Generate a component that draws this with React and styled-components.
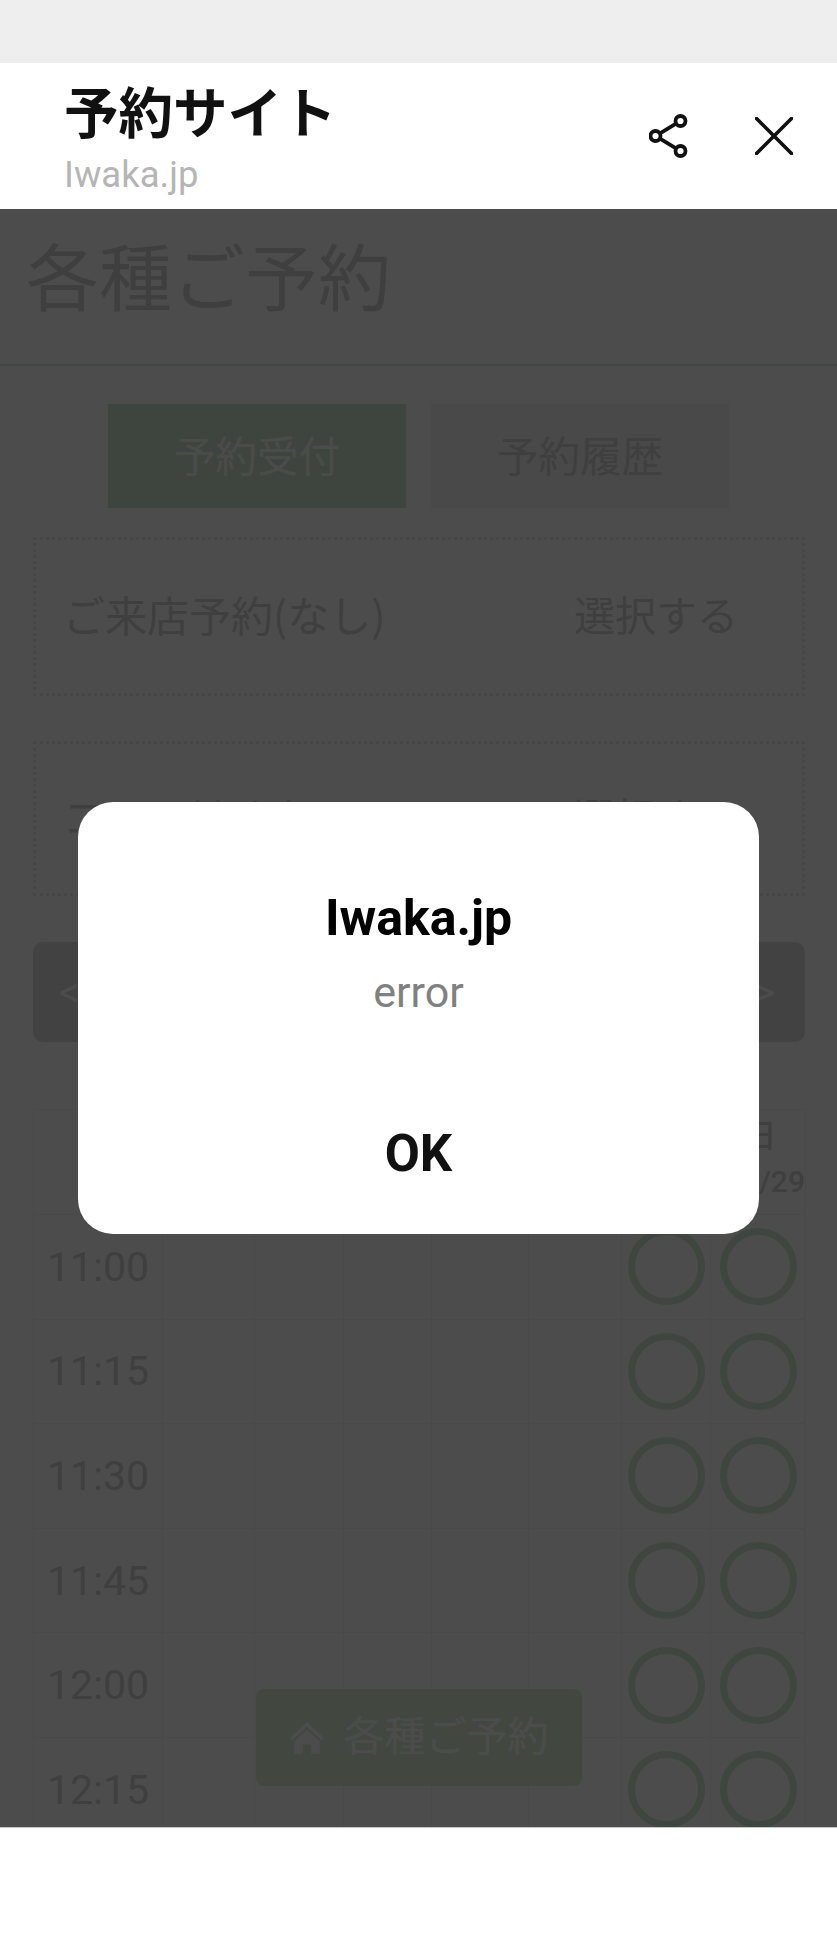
import React from "react";
import styled, { createGlobalStyle } from "styled-components";

const Global = createGlobalStyle`
  html, body { margin: 0; padding: 0; background: #fff; }
  * { box-sizing: border-box; }
  body { font-family: Roboto, "Noto Sans CJK JP", sans-serif; }
`;

const Screen = styled.div`
  width: 837px;
  height: 1953px;
  display: flex;
  flex-direction: column;
  overflow: hidden;
`;
const StatusBar = styled.div`
  height: 63px;
  flex: none;
  background: #eeeeee;
`;
const Header = styled.header`
  height: 146px;
  flex: none;
  background: #fff;
  display: flex;
  justify-content: space-between;
  align-items: center;
  padding: 0 44px 0 64px;
`;
const Titles = styled.div`
  display: flex;
  flex-direction: column;
  align-self: flex-start;
  margin-top: 19px;
`;
const SiteTitle = styled.div`
  font-family: "Noto Sans CJK JP", sans-serif;
  font-size: 54.5px;
  font-weight: 700;
  line-height: 56px;
  color: #111;
`;
const SiteHost = styled.div`
  font-size: 36.500px;
  line-height: 44px;
  color: #b5b5b5;
  margin-top: 15px;
`;
const Actions = styled.div`
  display: flex;
  align-items: center;
  gap: 67px;
  color: #111;
`;
const Viewport = styled.main`
  position: relative;
  height: 1618px;
  flex: none;
  overflow: hidden;
  background: #fff;
  font-family: "Noto Sans CJK JP", Roboto, sans-serif;
`;
const PageTitle = styled.h1`
  margin: 0;
  height: 157px;
  padding-left: 26px;
  font-size: 73px;
  font-weight: 400;
  line-height: 128px;
  color: #d2d2d2;
  border-bottom: 2px solid #d5ecd9;
`;
const Tabs = styled.div`
  display: flex;
  justify-content: center;
  gap: 25px;
  margin-top: 38px;
`;
const Tab = styled.div`
  width: 298px;
  height: 104px;
  padding-bottom: 5px;
  display: flex;
  align-items: center;
  justify-content: center;
  font-size: 41.5px;
  color: ${(p) => (p.$active ? "#f7fff7" : "#d2d2d2")};
  background: ${(p) => (p.$active ? "#cfe8d2" : "#f4f4f4")};
`;
const Choice = styled.div`
  margin: ${(p) => p.$top}px 32px 0 33px;
  height: ${(p) => p.$height}px;
  border: 3px dotted #ebebeb;
  padding: 0 64px 7px 27px;
  display: flex;
  align-items: center;
  justify-content: space-between;
  font-size: 42px;
  color: #d2d2d2;
`;
const ChoiceAction = styled.span`
  font-size: 41px;
`;
const Pager = styled.div`
  margin: 46px 32px 0 33px;
  height: 100px;
  border-radius: 10px;
  background: #dcdce0;
  display: flex;
  align-items: center;
  justify-content: space-between;
  padding: 0 30px 0 26px;
  font-family: Roboto, sans-serif;
  font-size: 40px;
  color: #fff;
`;
const Table = styled.div`
  margin: 67px 32px 0 33px;
  font-family: Roboto, "Noto Sans CJK JP", sans-serif;
`;
const Row = styled.div`
  display: grid;
  grid-template-columns: 130px 92px 89px 88px 97px 93px 89px 95px;
  height: ${(p) => p.$height}px;
  border-bottom: 1px solid #f4f4f4;
  border-top: ${(p) => (p.$first ? "1px solid #f4f4f4" : "none")};
`;
const Cell = styled.div`
  display: flex;
  align-items: center;
  justify-content: center;
  border-right: 1px solid #f4f4f4;
  border-left: ${(p) => (p.$first ? "1px solid #f4f4f4" : "none")};
`;
const TimeCell = styled(Cell)`
  font-size: 41px;
  font-weight: 400;
  color: #d2d2d2;
`;
const DayHead = styled(Cell)`
  flex-direction: column;
  justify-content: flex-start;
  color: #d2d2d2;
  font-weight: 500;
`;
const DayName = styled.div`
  font-family: "Noto Sans CJK JP", sans-serif;
  font-size: 32px;
  line-height: 46px;
  margin-left: 5px;
`;
const DayDate = styled.div`
  font-size: 30px;
  line-height: 40px;
  white-space: nowrap;
  margin: 6px -14px 0 0;
`;
const Mark = styled.div`
  width: 77px;
  height: 77px;
  border-radius: 50%;
  border: 7px solid #d0ecd4;
`;
const FloatButton = styled.div`
  position: absolute;
  left: 256px;
  bottom: 41px;
  width: 326px;
  height: 97px;
  border-radius: 8px;
  background: #ddf0d8;
  display: flex;
  align-items: center;
  justify-content: center;
  gap: 20px;
  font-size: 41px;
  color: #fff;
`;
const FloatLabel = styled.span`
  margin-bottom: 10px;
`;
const Overlay = styled.div`
  position: absolute;
  inset: 0;
  background: rgba(0, 0, 0, 0.7);
  display: flex;
  align-items: center;
  justify-content: center;
`;
const Dialog = styled.div`
  width: 681px;
  height: 432px;
  border-radius: 35px;
  background: #fff;
  padding-top: 86px;
  display: flex;
  flex-direction: column;
  align-items: center;
  font-family: Roboto, sans-serif;
`;
const DialogTitle = styled.div`
  font-size: 50px;
  font-weight: 700;
  line-height: 60px;
  color: #000;
`;
const DialogText = styled.div`
  font-size: 43px;
  line-height: 50px;
  color: #808080;
  margin-top: 19px;
`;
const DialogButton = styled.div`
  font-size: 51px;
  font-weight: 700;
  line-height: 62px;
  color: #111;
  margin-top: 106px;
`;
const Bottom = styled.div`
  flex: 1;
  background: #fff;
  border-top: 1px solid #c4c4c4;
`;

const ShareIcon = () => (
  <svg width="39" height="44" viewBox="0 0 39 44" fill="none" stroke="currentColor" strokeWidth="3.8">
    <circle cx="6.5" cy="22" r="5" />
    <circle cx="31.5" cy="7" r="5" />
    <circle cx="31.5" cy="37" r="5" />
    <path d="M11 19.3 27 9.7M11 24.7 27 34.3" />
  </svg>
);
const CloseIcon = () => (
  <svg width="38" height="38" viewBox="0 0 38 38" fill="none" stroke="currentColor" strokeWidth="3.6" strokeLinecap="round">
    <path d="M1.5 1.5 36.5 36.5M36.5 1.5 1.5 36.5" />
  </svg>
);
const HomeIcon = () => (
  <svg width="34" height="32" viewBox="0 0 32 30" fill="currentColor">
    <path d="M16 0 32 15l-2 2L16 4.500 2 17l-2-2z" />
    <path d="M16 7.500 28 18v12h-8v-9h-8v9H4V18z" />
  </svg>
);

const emptyDays = ["mon", "tue", "wed", "thu", "fri", "sat"];
const times = ["11:00", "11:15", "11:30", "11:45", "12:00", "12:15"];
const dayKeys = [...emptyDays, "sun"];

export default function App() {
  return (
    <Screen>
      <Global />
      <StatusBar />
      <Header>
        <Titles>
          <SiteTitle>予約サイト</SiteTitle>
          <SiteHost>Iwaka.jp</SiteHost>
        </Titles>
        <Actions>
          <ShareIcon />
          <CloseIcon />
        </Actions>
      </Header>
      <Viewport>
        <PageTitle>各種ご予約</PageTitle>
        <Tabs>
          <Tab $active>予約受付</Tab>
          <Tab>予約履歴</Tab>
        </Tabs>
        <Choice $top={29} $height={159}>
          <span>ご来店予約(なし)</span>
          <ChoiceAction>選択する</ChoiceAction>
        </Choice>
        <Choice $top={45} $height={155}>
          <span>コース(なし)</span>
          <ChoiceAction>選択する</ChoiceAction>
        </Choice>
        <Pager>
          <span>&lt;</span>
          <span>&gt;</span>
        </Pager>
        <Table>
          <Row $height={106} $first>
            <Cell $first />
            {emptyDays.map((d) => (
              <Cell key={d} />
            ))}
            <DayHead>
              <DayName>日</DayName>
              <DayDate>06/29</DayDate>
            </DayHead>
          </Row>
          {times.map((t) => (
            <Row key={t} $height={104.6}>
              <TimeCell $first>{t}</TimeCell>
              {dayKeys.map((d, i) => (
                <Cell key={d}>{i >= 5 && <Mark />}</Cell>
              ))}
            </Row>
          ))}
        </Table>
        <FloatButton>
          <HomeIcon />
          <FloatLabel>各種ご予約</FloatLabel>
        </FloatButton>
        <Overlay>
          <Dialog>
            <DialogTitle>Iwaka.jp</DialogTitle>
            <DialogText>error</DialogText>
            <DialogButton>OK</DialogButton>
          </Dialog>
        </Overlay>
      </Viewport>
      <Bottom />
    </Screen>
  );
}
